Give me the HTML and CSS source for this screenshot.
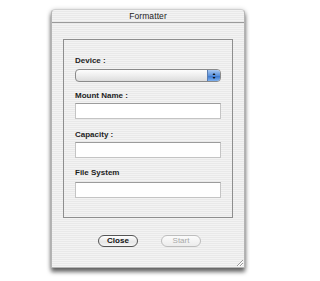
FILE: index.html
```html
<!DOCTYPE html>
<html>
<head>
<meta charset="utf-8">
<link rel="stylesheet" href="styles.css">
</head>
<body>
<div class="window">
  <div class="titlebar">Formatter</div>
  <div class="content">
    <div class="group">
      <div class="label">Device :</div>
      <div class="select">
        <div class="stepper">
          <svg width="12" height="10" viewBox="0 0 12 10"><path d="M4.5 4 L6 2 L7.5 4 Z" fill="#111"/><path d="M4.5 6 L6 8 L7.5 6 Z" fill="#111"/></svg>
        </div>
      </div>
      <div class="label l-mount">Mount Name :</div>
      <div class="input"></div>
      <div class="label l-cap">Capacity :</div>
      <div class="input"></div>
      <div class="label l-fs">File System</div>
      <div class="input i-fs"></div>
    </div>
    <div class="buttons">
      <div class="btn btn-default">Close</div>
      <div class="btn btn-disabled">Start</div>
    </div>
  </div>
  <div class="grip">
    <svg width="9" height="9" viewBox="0 0 9 9"><path d="M8 2 L2 8 M8 5 L5 8" stroke="#999" stroke-width="1"/><path d="M8 3 L3 8 M8 6 L6 8" stroke="#fff" stroke-width="1"/></svg>
  </div>
</div>
</body>
</html>
```
FILE: styles.css
```css
html, body {
  margin: 0;
  padding: 0;
  background: #ffffff;
}
body {
  font-family: "Liberation Sans", Arial, sans-serif;
  width: 296px;
  height: 281px;
  overflow: hidden;
}
.window {
  position: relative;
  margin: 9px 0 0 51px;
  width: 194px;
  height: 259px;
  box-sizing: border-box;
  border: 1px solid #b4b4b4;
  border-top-color: #d0d0d0;
  border-radius: 4px 4px 0 0;
  background: repeating-linear-gradient(to bottom, #f3f3f3 0, #f3f3f3 1px, #e9e9e9 1px, #e9e9e9 2px);
  box-shadow: 0 4px 4px rgba(0,0,0,0.55), 0 1px 5px rgba(0,0,0,0.25);
}
.titlebar {
  height: 12px;
  line-height: 13px;
  text-align: center;
  font-size: 8.5px;
  color: #222;
  border-bottom: 1px solid #9a9a9a;
  letter-spacing: 0.1px;
}
.content {
  padding: 16px 11px 0 11px;
}
.group {
  border: 1px solid #8e8e8e;
  padding: 16px 11px 19px 11px;
  display: flex;
  flex-direction: column;
}
.label {
  font-size: 8px;
  font-weight: bold;
  line-height: 10px;
  height: 10px;
  color: #1e1e1e;
}
.l-mount { margin-top: 9px; }
.l-cap { margin-top: 11px; }
.l-fs { margin-top: 10px; }
.select {
  margin-top: 3px;
  height: 13px;
  box-sizing: border-box;
  border: 1px solid #8a8a8a;
  border-radius: 4px;
  background: linear-gradient(to bottom, #fdfdfd 0%, #eeeeee 50%, #dcdcdc 100%);
  display: flex;
  justify-content: flex-end;
  overflow: hidden;
}
.stepper {
  width: 12px;
  height: 11px;
  background: linear-gradient(to bottom, #a9c8f0 0%, #5d93dc 50%, #3a78cf 55%, #7eb0ee 100%);
  border-left: 1px solid #5a7db0;
  display: flex;
  align-items: center;
  justify-content: center;
}
.stepper svg { display: block; }
.input {
  margin-top: 2px;
  height: 16px;
  box-sizing: border-box;
  background: #ffffff;
  border: 1px solid #c4c4c4;
  border-top-color: #9c9c9c;
}
.i-fs { margin-top: 4px; }
.buttons {
  margin-top: 17px;
  display: flex;
  justify-content: center;
  gap: 23px;
  padding-left: 3px;
}
.btn {
  width: 40px;
  height: 12px;
  box-sizing: border-box;
  border-radius: 6px;
  font-size: 8px;
  line-height: 10px;
  text-align: center;
}
.btn-default {
  border: 1px solid #555;
  font-weight: bold;
  color: #111;
  background: linear-gradient(to bottom, #ffffff 0%, #e6e6e6 60%, #f6f6f6 100%);
}
.btn-disabled {
  border: 1px solid #bdbdbd;
  color: #a8a8a8;
  background: linear-gradient(to bottom, #fbfbfb 0%, #ececec 100%);
}
.grip {
  position: absolute;
  right: 0;
  bottom: 0;
  width: 9px;
  height: 9px;
}
.grip svg { display: block; }
```
